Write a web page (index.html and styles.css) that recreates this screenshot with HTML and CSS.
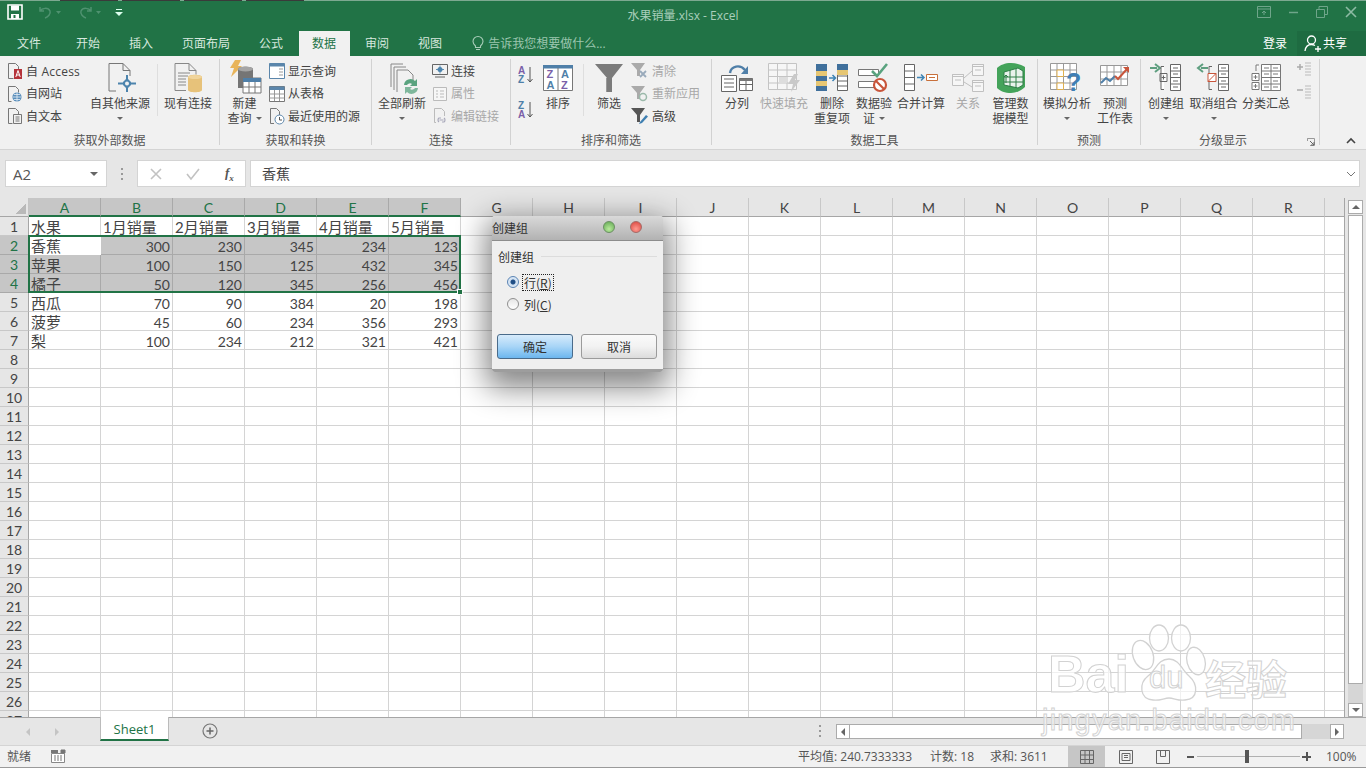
FILE: index.html
```html
<!DOCTYPE html>
<html lang="zh-CN">
<head>
<meta charset="utf-8">
<title>水果销量.xlsx - Excel</title>
<link rel="stylesheet" href="styles.css">
</head>
<body>
<div class="app">
  <header class="titlebar">
    <div class="qat">
      <svg class="qat-save" width="16" height="16" viewBox="0 0 16 16"><path d="M1 1h14v14H1z" fill="none" stroke="#fff" stroke-width="1.6"/><path d="M4 1.500h8v5H4z" fill="#fff"/><path d="M4 10h8v5H4z" fill="#fff"/><path d="M6.500 11h2v3h-2z" fill="#217346"/></svg>
      <svg class="qat-undo" width="26" height="14" viewBox="0 0 26 14"><path d="M3 2v4h4M3 6c2-3 8-4 10 0 1 3-2 6-5 7" fill="none" stroke="#4f9270" stroke-width="1.500"/><path d="M19 6l5 0-2.500 3z" fill="#4f9270"/></svg>
      <svg class="qat-redo" width="26" height="14" viewBox="0 0 26 14"><path d="M14 2v4h-4M14 6c-2-3-8-4-10 0-1 3 2 6 5 7" fill="none" stroke="#4f9270" stroke-width="1.500"/><path d="M19 6l5 0-2.500 3z" fill="#4f9270"/></svg>
      <svg class="qat-more" width="8" height="9" viewBox="0 0 8 9"><path d="M1 1h6v1H1zM0 4h8L4 8z" fill="#dfe"/></svg>
    </div>
    <div class="doc-title">水果销量.xlsx - Excel</div>
    <div class="winctl">
      <svg width="14" height="12" viewBox="0 0 14 12"><path d="M.5.500h13v11H.500zM.5 3h13M7 9V5M5 7l2-2 2 2" fill="none" stroke="#6fa58a"/></svg>
      <svg width="11" height="12" viewBox="0 0 11 12"><path d="M1 6.500h9" stroke="#6fa58a" stroke-width="1.500"/></svg>
      <svg width="12" height="12" viewBox="0 0 12 12"><path d="M.5 3.500h8v8H.500zM3 3.500V.500h8.500v8H8.500" fill="none" stroke="#6fa58a"/></svg>
      <svg width="12" height="12" viewBox="0 0 12 12"><path d="M1 1l10 10M11 1L1 11" stroke="#8dbba4" stroke-width="1.600"/></svg>
    </div>
  </header>

  <nav class="tabs">
    <span class="tab tab-file">文件</span>
    <span class="tab">开始</span>
    <span class="tab">插入</span>
    <span class="tab">页面布局</span>
    <span class="tab">公式</span>
    <span class="tab tab-active">数据</span>
    <span class="tab">审阅</span>
    <span class="tab">视图</span>
    <span class="tell">
      <svg width="12" height="15" viewBox="0 0 12 15"><path d="M3.500 10C2 8.500 1 7.500 1 5.500a5 5 0 0 1 10 0c0 2-1 3-2.500 4.500v1.500h-5zM4 13.500h4" fill="none" stroke="#a9cdb9" stroke-width="1.100"/></svg>
      告诉我您想要做什么...
    </span>
    <span class="login">登录</span>
    <span class="share">
      <svg width="18" height="17" viewBox="0 0 18 17"><circle cx="7.500" cy="5" r="4" fill="none" stroke="#fff" stroke-width="1.300"/><path d="M1 16c.5-4 3-6.500 6.500-6.500 1.500 0 2.500.5 3.500 1M11 14h6M14 11v6" fill="none" stroke="#fff" stroke-width="1.300"/></svg>
      共享
    </span>
  </nav>

  <section class="ribbon">
    <!-- 获取外部数据 -->
    <div class="group g-ext">
      <div class="items">
        <div class="col col-ext">
          <div class="small"><svg width="16" height="18" viewBox="0 0 16 18"><path d="M1.500 1.500h7l3 3v3M1.500 1.500v15h5" fill="none" stroke="#777"/><path d="M7 7h8v10H7z" fill="#b5333a"/><path d="M8.800 15l2.200-6.500 2.200 6.500M9.500 13h3" fill="none" stroke="#fff"/></svg><span class="sm-latin">自 Access</span></div>
          <div class="small"><svg width="16" height="18" viewBox="0 0 16 18"><path d="M4.500 16.500h-3v-15h7l3 3v3" fill="none" stroke="#777"/><circle cx="10" cy="12" r="4.600" fill="#5b8fbc"/><path d="M5.800 12h8.400M10 7.500v9M7 9.500h6M7 14.500h6" stroke="#e8f0f6" stroke-width=".8"/></svg><span>自网站</span></div>
          <div class="small"><svg width="16" height="18" viewBox="0 0 16 18"><path d="M5.500 16.500h-4v-15h7l3 3v3" fill="none" stroke="#777"/><path d="M6.500 7.500h8v9h-8zM8.500 10h4M8.500 12h4M8.500 14h4" fill="none" stroke="#777"/></svg><span>自文本</span></div>
        </div>
        <div class="big w60">
          <div class="ico"><svg width="34" height="34" viewBox="0 0 34 34"><path d="M13 30H6V2.500h14l7 7V15M20 2.500v7h7" fill="none" stroke="#777"/><path d="M24 14v4M24 27v4M15 22.500h4M29 22.500h4" stroke="#4d84ad" stroke-width="2"/><path d="M24 17l5.500 5.500L24 28l-5.500-5.500z" fill="#4d84ad"/><circle cx="24" cy="22.500" r="2" fill="#f1f1f1"/></svg></div>
          <span>自其他来源</span><i class="caret"></i>
        </div>
        <div class="vsep sep-ext"></div>
        <div class="big w56">
          <div class="ico"><svg width="34" height="34" viewBox="0 0 34 34"><path d="M15 29.500H4V2.500h14l7 7v4M18 2.500v7h7M7 12h12M7 15h10M7 18h8M7 21h8M7 24h8" fill="none" stroke="#888"/><path d="M17 16c0-3 14-3 14 0v13c0 3-14 3-14 0z" fill="#e7c27a"/><ellipse cx="24" cy="16" rx="7" ry="2" fill="#f1d59c"/></svg></div>
          <span>现有连接</span>
        </div>
      </div>
      <div class="glabel">获取外部数据</div>
    </div>

    <!-- 获取和转换 -->
    <div class="group g-get">
      <div class="items">
        <div class="big w49">
          <div class="ico"><svg width="36" height="36" viewBox="0 0 36 36"><path d="M8 0h6l-3 6h4L4 17l3-9H3z" fill="#e8b45a"/><path d="M11 9c0-3 15-3 15 0v19H11z" fill="#757575"/><ellipse cx="18.500" cy="9" rx="7.500" ry="2.500" fill="#a5a5a5"/><path d="M16 18h18v15H16z" fill="#fff" stroke="#777"/><path d="M16 18h18v4H16z" fill="#4f7fa8"/><path d="M16 27h18M22 22v11M28 22v11" stroke="#777"/></svg></div>
          <span>新建</span><span>查询<i class="caret inline"></i></span>
        </div>
        <div class="col">
          <div class="small sm-w"><svg width="16" height="16" viewBox="0 0 16 16"><path d="M.5.500h15v15H.500z" fill="#fff" stroke="#5b86ab"/><path d="M.5.500h15v3H.500z" fill="#5b86ab"/><path d="M10 6h4M10 9h4M10 12h4" stroke="#999"/></svg><span>显示查询</span></div>
          <div class="small sm-w"><svg width="16" height="16" viewBox="0 0 16 16"><path d="M.5.500h15v15H.500z" fill="#fff" stroke="#777"/><path d="M.5.500h15v3.500H.500z" fill="#5b86ab"/><path d="M.5 8h15M.5 12h15M5.500 4v11M10.500 4v11" stroke="#999"/></svg><span>从表格</span></div>
          <div class="small sm-w"><svg width="16" height="18" viewBox="0 0 16 18"><path d="M5 16.500H1.500v-15h6l3 3V8" fill="none" stroke="#777"/><circle cx="10.500" cy="12.500" r="4.500" fill="#fff" stroke="#5b86ab"/><path d="M10.500 10v3h2.500" fill="none" stroke="#555"/></svg><span>最近使用的源</span></div>
        </div>
      </div>
      <div class="glabel">获取和转换</div>
    </div>

    <!-- 连接 -->
    <div class="group g-conn">
      <div class="items">
        <div class="big w60">
          <div class="ico"><svg width="34" height="34" viewBox="0 0 34 34"><path d="M6 26V3h12M9 29V6h12M12 31V9h11l5 5v5" fill="none" stroke="#888"/><path d="M19 24a6.500 6.500 0 0 1 11-4l2-2v7h-7l2-2a3.500 3.500 0 0 0-5 1z" fill="#5aa37f"/><path d="M33 27a6.500 6.500 0 0 1-11 4l-2 2v-7h7l-2 2a3.500 3.500 0 0 0 5-1z" fill="#7fb79c"/></svg></div>
          <span>全部刷新</span><i class="caret"></i>
        </div>
        <div class="col">
          <div class="small sm-w"><svg width="16" height="16" viewBox="0 0 16 16"><path d="M.5 1.500h15v10H.500zM3 14h10" fill="none" stroke="#666"/><circle cx="8" cy="6.500" r="2.500" fill="#4d84ad"/><path d="M8 2.500v8M4 6.500h8" stroke="#4d84ad" stroke-width=".9"/></svg><span>连接</span></div>
          <div class="small sm-w off"><svg width="16" height="16" viewBox="0 0 16 16"><path d="M1.500 1.500h13v13h-13z" fill="#f6f6f6" stroke="#bbb"/><path d="M4 5h2M8 5h4M4 8h2M8 8h4M4 11h2M8 11h4" stroke="#bbb"/></svg><span>属性</span></div>
          <div class="small sm-w off"><svg width="16" height="18" viewBox="0 0 16 18"><path d="M4 15.500H2.500v-14h7l3 3V9" fill="none" stroke="#bbb"/><path d="M7 15a2.500 2.500 0 0 1 0-4h2M12 11a2.500 2.500 0 0 1 0 4h-2M7.500 13h4" fill="none" stroke="#aab" stroke-width="1.200"/></svg><span>编辑链接</span></div>
        </div>
      </div>
      <div class="glabel">连接</div>
    </div>

    <!-- 排序和筛选 -->
    <div class="group g-sort">
      <div class="items">
        <div class="col col-az">
          <svg class="az" width="16" height="20" viewBox="0 0 16 20"><text x="0" y="9" class="az-top">A</text><text x="0" y="18" class="az-bot">Z</text><path d="M12 2v15M9.500 14l2.500 3 2.500-3" fill="none" stroke="#555"/></svg>
          <svg class="az" width="16" height="20" viewBox="0 0 16 20"><text x="0" y="9" class="az-bot">Z</text><text x="0" y="18" class="az-top">A</text><path d="M12 2v15M9.500 14l2.500 3 2.500-3" fill="none" stroke="#555"/></svg>
        </div>
        <div class="big w34">
          <div class="ico"><svg width="30" height="26" viewBox="0 0 30 26"><path d="M.5.500h29v25H.500z" fill="#fff" stroke="#777"/><path d="M0 0h30v3.500H0z" fill="#4f7fa8"/><path d="M15 3v23" stroke="#777"/><text x="3.500" y="13" class="az-a">Z</text><text x="3.500" y="23.500" class="az-b">A</text><text x="18" y="13" class="az-b">A</text><text x="18" y="23.500" class="az-a">Z</text></svg></div>
          <span>排序</span>
        </div>
        <div class="vsep sep-sort"></div>
        <div class="big w36">
          <div class="ico"><svg width="28" height="28" viewBox="0 0 28 28"><path d="M0 0h28L17 14v14h-5V14z" fill="#7b7b7b"/><path d="M11.500 14v14" stroke="#999"/></svg></div>
          <span>筛选</span>
        </div>
        <div class="col col-filter">
          <div class="small off"><svg width="18" height="16" viewBox="0 0 18 16"><path d="M0 0h14L9 7v6H6V7z" fill="#aaa"/><path d="M9 8l6 6M15 8l-6 6" stroke="#9ab" stroke-width="1.800"/></svg><span>清除</span></div>
          <div class="small off"><svg width="18" height="16" viewBox="0 0 18 16"><path d="M0 0h14L9 7v6H6V7z" fill="#aaa"/><circle cx="12" cy="11" r="3.500" fill="none" stroke="#9bb9aa" stroke-width="1.500"/></svg><span>重新应用</span></div>
          <div class="small"><svg width="18" height="16" viewBox="0 0 18 16"><path d="M0 0h14L9 7v7H6V7z" fill="#555"/><path d="M9 14l6-7 2 1.500-6 6.500-3 1z" fill="#3e7fb1"/></svg><span>高级</span></div>
        </div>
      </div>
      <div class="glabel">排序和筛选</div>
    </div>

    <!-- 数据工具 -->
    <div class="group g-tools">
      <div class="items">
        <div class="big w50">
          <div class="ico"><svg width="32" height="30" viewBox="0 0 32 30"><path d="M.5 12.500h15v16H.500zM3 16h10M3 20h10M3 24h10" fill="#fff" stroke="#666"/><path d="M18.500 15.500h13v12h-13zM18.500 21.500h13M25 15.500v12" fill="#fff" stroke="#666"/><path d="M18.500 15.500h13v2.500h-13z" fill="#777"/><path d="M9 10c1-7 10-9 15-3" fill="none" stroke="#4f7fa8" stroke-width="2.400"/><path d="M27 3v8h-7z" fill="#4f7fa8"/></svg></div>
          <span>分列</span>
        </div>
        <div class="big w44 off">
          <div class="ico"><svg width="32" height="30" viewBox="0 0 32 30"><path d="M.5.500h28v26H.500zM.5 7h28M.5 13.500h28M.5 20h28M9.500.500v26M19 .500v26" fill="#f6f6f6" stroke="#c4c4c4"/><path d="M11 14h8v6h-8z" fill="#ddd"/><path d="M26 11l-6 10h5l-2 8 9-12h-5l3-6z" fill="#c9c9c9"/></svg></div>
          <span>快速填充</span>
        </div>
        <div class="big w52">
          <div class="ico"><svg width="32" height="28" viewBox="0 0 32 28"><path d="M0 0h11v27H0z" fill="#40709c"/><path d="M0 7h11v5H0zM0 17h11v5H0z" fill="#e6c673"/><path d="M21.500.500h10v26h-10zM21.500 12h10M21.500 17h10M21.500 22h10" fill="#fff" stroke="#666"/><path d="M21 0h11v6H21z" fill="#40709c"/><path d="M21 6h11v5H21z" fill="#e6c673"/><path d="M13 14h6M16.500 11l3 3-3 3" fill="none" stroke="#3f84b5" stroke-width="1.500"/></svg></div>
          <span>删除</span><span>重复项</span>
        </div>
        <div class="big w32">
          <div class="ico"><svg width="32" height="30" viewBox="0 0 32 30"><path d="M.5 6.500h20v6H.500zM.5 18.500h16v6H.500z" fill="#fff" stroke="#777"/><path d="M14 8l5 5 10-12" fill="none" stroke="#5aa37f" stroke-width="2.600"/><circle cx="22" cy="22" r="6" fill="#fff" stroke="#c8553b" stroke-width="2.200"/><path d="M18 18l8 8" stroke="#c8553b" stroke-width="2.200"/></svg></div>
          <span>数据验</span><span>证<i class="caret inline"></i></span>
        </div>
        <div class="big w62">
          <div class="ico"><svg width="34" height="28" viewBox="0 0 34 28"><path d="M.5.500h10v26H.500zM.5 7h10M.5 13.500h10M.5 20h10" fill="#fff" stroke="#666"/><path d="M13 13.500h7M17 10.500l3 3-3 3" fill="none" stroke="#3f84b5" stroke-width="1.500"/><path d="M22.500 10.500h11v6h-11z" fill="#fff" stroke="#c8703b"/><path d="M25 13.500h6" stroke="#c8703b"/></svg></div>
          <span>合并计算</span>
        </div>
        <div class="big w32 off">
          <div class="ico"><svg width="32" height="28" viewBox="0 0 32 28"><path d="M.5 10.500h11v11H.500zM20.500.500h11v11h-11zM20.500 16.500h11v11h-11z" fill="#f6f6f6" stroke="#c0c0c0"/><path d="M.5 10.500h11v2H.500zM20.500.500h11v2h-11zM20.500 16.500h11v2h-11zM3 16h6M23 6h6M23 22h6M12 14l8-7M12 18l8 5" fill="none" stroke="#c0c0c0"/></svg></div>
          <span>关系</span>
        </div>
        <div class="big w53">
          <div class="ico"><svg width="30" height="30" viewBox="0 0 30 30"><path d="M15 0c6 0 11 2 14 4v20c-3 3-8 6-14 6S4 28 1 25V5c3-3 8-5 14-5z" fill="#44a35a"/><path d="M8 9l14-4 5 3v14l-5 3-14-3z" fill="#e9f3ec" stroke="#2f7f47"/><path d="M14 7v17M20 6v19M8 14h19M8 19h19" stroke="#2f7f47"/><path d="M10 20v-8M10 12l-2 2M10 12l2 2" fill="none" stroke="#2f7f47"/></svg></div>
          <span>管理数</span><span>据模型</span>
        </div>
      </div>
      <div class="glabel">数据工具</div>
    </div>

    <!-- 预测 -->
    <div class="group g-fore">
      <div class="items">
        <div class="big w58">
          <div class="ico"><svg width="34" height="30" viewBox="0 0 34 30"><path d="M.5.500h26v26H.500zM.5 7h26M.5 13.500h26M.5 20h26M7 .500v26M13.500.500v26M20 .500v26" fill="#fff" stroke="#999"/><path d="M7 7h6.500v6.500H7zM7 20h6.500v6.500H7z" fill="#fff" stroke="#e0b050"/><text x="16" y="28" class="qm">?</text></svg></div>
          <span>模拟分析</span><i class="caret"></i>
        </div>
        <div class="big w38">
          <div class="ico"><svg width="30" height="26" viewBox="0 0 30 26"><path d="M.5.500h27v20H.500zM.5 7h27M.5 14h27M7 .500v20M14 .500v20M21 .500v20" fill="#fff" stroke="#999"/><path d="M1 18l5-5 4 3 5-5" fill="none" stroke="#4f7fa8" stroke-width="2"/><path d="M15 11l3 3 9-10" fill="none" stroke="#c8553b" stroke-width="2"/><path d="M23 2h6v6z" fill="#c8553b"/></svg></div>
          <span>预测</span><span>工作表</span>
        </div>
      </div>
      <div class="glabel">预测</div>
    </div>

    <!-- 分级显示 -->
    <div class="group g-outline">
      <div class="items">
        <div class="big w50">
          <div class="ico"><svg width="32" height="28" viewBox="0 0 32 28"><path d="M0 4h7M5 0l5 4-5 4" fill="none" stroke="#5f9f80" stroke-width="2"/><path d="M14 2.500h-3v23h3M10 9.500h7v8h-7zM13.500 11.500v4M11.500 13.500h4" fill="#fff" stroke="#666"/><path d="M20.500.500h10v26h-10zM20.500 7h10M20.500 13.500h10M20.500 20h10M23 4h5M23 10h5M23 17h5M23 23h5" fill="#fff" stroke="#666"/></svg></div>
          <span>创建组</span><i class="caret"></i>
        </div>
        <div class="big w45">
          <div class="ico"><svg width="32" height="28" viewBox="0 0 32 28"><path d="M10 4H3M5 0L0 4l5 4" fill="none" stroke="#5f9f80" stroke-width="2"/><path d="M14 2.500h-3v23h3" fill="none" stroke="#666"/><path d="M10 9.500h8v8h-8z" fill="#fff" stroke="#c8553b"/><path d="M10 17.500l8-8" stroke="#c8553b"/><path d="M20.500.500h10v26h-10zM20.500 7h10M20.500 13.500h10M20.500 20h10M23 4h5M23 10h5M23 17h5M23 23h5" fill="#fff" stroke="#666"/></svg></div>
          <span>取消组合</span><i class="caret"></i>
        </div>
        <div class="big w60">
          <div class="ico"><svg width="30" height="28" viewBox="0 0 30 28"><path d="M5 7V1h3M1 9.500h7v7H1zM1 18.500h7v7H1zM4.500 11v4M2.500 13h4M4.500 20v4M2.500 22h4" fill="#fff" stroke="#777"/><path d="M10.500.500h19v26h-19zM10.500 7h19M10.500 13.500h19M10.500 20h19M20 .500v26M13 4h5M13 10h5M13 17h5M13 23h5M22 4h5M22 10h5M22 17h5M22 23h5" fill="#fff" stroke="#777"/></svg></div>
          <span>分类汇总</span>
        </div>
        <div class="col col-outl">
          <svg width="16" height="16" viewBox="0 0 16 16"><path d="M1 5h6M4 2v6" stroke="#aaa" stroke-width="1.500"/><path d="M9 1h6M9 4h6M9 7h6M9 10h6M9 13h6" stroke="#bbb"/></svg>
          <svg width="16" height="16" viewBox="0 0 16 16"><path d="M1 5h6" stroke="#aaa" stroke-width="1.500"/><path d="M9 1h6M9 4h6M9 7h6M9 10h6M9 13h6" stroke="#bbb"/></svg>
        </div>
      </div>
      <div class="glabel">分级显示</div>
      <svg class="launcher" width="8" height="8" viewBox="0 0 8 8"><path d="M.5 3V.500H5M.5.500h7v7H3" fill="none" stroke="#999"/><path d="M3 3l4 4M4 7h3V4" fill="none" stroke="#666"/></svg>
    </div>
    <svg class="fold" width="10" height="6" viewBox="0 0 10 6"><path d="M1 5l4-4 4 4" fill="none" stroke="#444" stroke-width="1.600"/></svg>
  </section>

  <section class="fbar">
    <div class="namebox"><span>A2</span><i class="caret"></i></div>
    <div class="fdots"></div>
    <div class="fbtns">
      <svg width="12" height="12" viewBox="0 0 12 12"><path d="M1 1l10 10M11 1L1 11" stroke="#c2c2c2" stroke-width="1.600"/></svg>
      <svg width="14" height="12" viewBox="0 0 14 12"><path d="M1 6l4 5 8-10" fill="none" stroke="#c2c2c2" stroke-width="1.600"/></svg>
      <span class="fx">f<sub>x</sub></span>
    </div>
    <div class="finput"><span>香蕉</span><svg width="10" height="6" viewBox="0 0 10 6"><path d="M1 1l4 4 4-4" fill="none" stroke="#777"/></svg></div>
  </section>

  <main class="sheet">
    <div class="grid">
      <div class="colhead">
        <div class="corner"></div>
        <span class="ch sel">A</span><span class="ch sel">B</span><span class="ch sel">C</span><span class="ch sel">D</span><span class="ch sel">E</span><span class="ch sel">F</span>
        <span class="ch">G</span><span class="ch">H</span><span class="ch">I</span><span class="ch">J</span><span class="ch">K</span><span class="ch">L</span><span class="ch">M</span><span class="ch">N</span><span class="ch">O</span><span class="ch">P</span><span class="ch">Q</span><span class="ch">R</span>
        <span class="ch-fill"></span>
      </div>
      <div class="row"><span class="rh">1</span><div class="cells"><span class="c">水果</span><span class="c">1月销量</span><span class="c">2月销量</span><span class="c">3月销量</span><span class="c">4月销量</span><span class="c">5月销量</span></div></div>
      <div class="row"><span class="rh sel">2</span><div class="cells"><span class="c active">香蕉</span><span class="c n s">300</span><span class="c n s">230</span><span class="c n s">345</span><span class="c n s">234</span><span class="c n s">123</span></div></div>
      <div class="row"><span class="rh sel">3</span><div class="cells"><span class="c s">苹果</span><span class="c n s">100</span><span class="c n s">150</span><span class="c n s">125</span><span class="c n s">432</span><span class="c n s">345</span></div></div>
      <div class="row"><span class="rh sel">4</span><div class="cells"><span class="c s">橘子</span><span class="c n s">50</span><span class="c n s">120</span><span class="c n s">345</span><span class="c n s">256</span><span class="c n s">456</span></div></div>
      <div class="row"><span class="rh">5</span><div class="cells"><span class="c">西瓜</span><span class="c n">70</span><span class="c n">90</span><span class="c n">384</span><span class="c n">20</span><span class="c n">198</span></div></div>
      <div class="row"><span class="rh">6</span><div class="cells"><span class="c">菠萝</span><span class="c n">45</span><span class="c n">60</span><span class="c n">234</span><span class="c n">356</span><span class="c n">293</span></div></div>
      <div class="row"><span class="rh">7</span><div class="cells"><span class="c">梨</span><span class="c n">100</span><span class="c n">234</span><span class="c n">212</span><span class="c n">321</span><span class="c n">421</span></div></div>
      <div class="row"><span class="rh">8</span><div class="cells"></div></div>
      <div class="row"><span class="rh">9</span><div class="cells"></div></div>
      <div class="row"><span class="rh">10</span><div class="cells"></div></div>
      <div class="row"><span class="rh">11</span><div class="cells"></div></div>
      <div class="row"><span class="rh">12</span><div class="cells"></div></div>
      <div class="row"><span class="rh">13</span><div class="cells"></div></div>
      <div class="row"><span class="rh">14</span><div class="cells"></div></div>
      <div class="row"><span class="rh">15</span><div class="cells"></div></div>
      <div class="row"><span class="rh">16</span><div class="cells"></div></div>
      <div class="row"><span class="rh">17</span><div class="cells"></div></div>
      <div class="row"><span class="rh">18</span><div class="cells"></div></div>
      <div class="row"><span class="rh">19</span><div class="cells"></div></div>
      <div class="row"><span class="rh">20</span><div class="cells"></div></div>
      <div class="row"><span class="rh">21</span><div class="cells"></div></div>
      <div class="row"><span class="rh">22</span><div class="cells"></div></div>
      <div class="row"><span class="rh">23</span><div class="cells"></div></div>
      <div class="row"><span class="rh">24</span><div class="cells"></div></div>
      <div class="row"><span class="rh">25</span><div class="cells"></div></div>
      <div class="row"><span class="rh">26</span><div class="cells"></div></div>
      <div class="row"><span class="rh">27</span><div class="cells"></div></div>
      <div class="selection"><i class="handle"></i></div>
    </div>
    <div class="vscroll">
      <button class="sbtn"><i class="tri up"></i></button>
      <div class="vthumb"></div>
      <div class="vtrack"></div>
      <button class="sbtn"><i class="tri down"></i></button>
    </div>
  </main>

  <section class="sheetbar">
    <div class="navs"><i class="tri left dim"></i><i class="tri right dim"></i></div>
    <div class="sheet-tab">Sheet1</div>
    <svg class="addsheet" width="16" height="16" viewBox="0 0 16 16"><circle cx="8" cy="8" r="7" fill="none" stroke="#777" stroke-width="1.200"/><path d="M4.500 8h7M8 4.500v7" stroke="#666" stroke-width="1.500"/></svg>
    <div class="sdots"></div>
    <div class="hscroll">
      <button class="sbtn"><i class="tri left"></i></button>
      <div class="hthumb"></div>
      <div class="htrack"></div>
      <button class="sbtn"><i class="tri right"></i></button>
    </div>
  </section>

  <footer class="status">
    <span class="ready">就绪</span>
    <svg class="macro" width="14" height="13" viewBox="0 0 14 13"><path d="M.5 3.500h13v9H.500z" fill="#fff" stroke="#888"/><path d="M0 0h7v3H0z" fill="#777"/><path d="M10 0h4v3h-4zM3 6h2M6 6h2M9 6h2M3 8h2M6 8h2M9 8h2M3 10h2M6 10h2M9 10h2" fill="#777" stroke="#777"/></svg>
    <span class="stat st-avg">平均值: 240.7333333</span>
    <span class="stat st-cnt">计数: 18</span>
    <span class="stat st-sum">求和: 3611</span>
    <span class="view view-on"><svg width="14" height="14" viewBox="0 0 14 14"><path d="M.5.500h13v13H.500zM.5 5h13M.5 9.500h13M5 .500v13M9.500.500v13" fill="none" stroke="#666"/></svg></span>
    <span class="view"><svg width="14" height="14" viewBox="0 0 14 14"><path d="M.5.500h13v13H.500zM3 3.500h8v7H3zM5 5.500h4M5 7.500h4" fill="none" stroke="#666"/></svg></span>
    <span class="view"><svg width="14" height="14" viewBox="0 0 14 14"><path d="M.5.500h13v13H.500zM4.500.500v6h5v-6" fill="none" stroke="#666"/></svg></span>
    <span class="zoom-minus"></span>
    <span class="slider"><i class="knob"></i></span>
    <span class="zoom-plus"></span>
    <span class="pct">100%</span>
  </footer>

  <div class="shade-dialog">
    <div class="dlg-title"><span>创建组</span><i class="orb green"></i><i class="orb red"></i></div>
    <div class="dlg-body">
      <div class="legend"><span>创建组</span><i></i></div>
      <div class="radio-row"><i class="radio on"></i><span class="focus">行(<u>R</u>)</span></div>
      <div class="radio-row"><i class="radio"></i><span class="plain">列(<u>C</u>)</span></div>
      <div class="dlg-btns"><button class="btn primary">确定</button><button class="btn">取消</button></div>
    </div>
  </div>

  <div class="watermark">
    <svg class="paw" width="70" height="90" viewBox="0 0 70 90"><g fill="rgba(255,255,255,.65)" stroke="#d2d2d2" stroke-width="1.300"><ellipse cx="26" cy="17" rx="9.500" ry="13"/><ellipse cx="48" cy="17" rx="9.500" ry="13"/><ellipse cx="10" cy="34" rx="10" ry="15" transform="rotate(-20 10 34)"/><ellipse cx="63" cy="40" rx="9" ry="14" transform="rotate(-15 63 40)"/><path d="M36 38c10 0 13 11 20 17 9 8 10 23-4 24-7 1-11-2-16-2s-9 3-16 2C6 78 6 62 15 55c8-6 10-17 21-17z"/></g></svg>
    <span class="wm wm-bai">Bai</span>
    <span class="wm wm-du">du</span>
    <span class="wm wm-jy">经验</span>
    <span class="wm wm-url">jingyan.baidu.com</span>
  </div>
</div>
</body>
</html>
```

FILE: styles.css
```css
* { box-sizing: border-box; }
html, body { margin: 0; height: 100%; }
body {
  overflow: hidden;
  font: 12px/15px "Open Sans", "Noto Sans CJK SC", sans-serif;
  color: #444;
  background: #e6e6e6;
}
.app { position: relative; width: 1366px; height: 768px; display: flex; flex-direction: column; overflow: hidden; }
svg { display: block; flex: none; overflow: visible; }
button { font: inherit; padding: 0; }

/* title bar */
.titlebar {
  height: 31px; flex: none; background: #217346; border-top: 1px solid #7da991;
  display: flex; align-items: flex-start; position: relative;
}
.titlebar::before {
  content: ""; position: absolute; left: 60px; top: -1px; width: 245px; height: 1px;
  background: repeating-linear-gradient(90deg, #3a3a3a 0 58px, #7da991 58px 62px);
}
.qat { display: flex; align-items: center; padding: 3px 0 0 7px; }
.qat-undo { margin-left: 14px; }
.qat-redo { margin-left: 14px; }
.qat-more { margin-left: 12px; }
.doc-title { position: absolute; left: 0; right: 0; top: 7px; text-align: center; color: #a9cfbb; font-size: 12px; line-height: 16px; }
.winctl { margin-left: auto; display: flex; align-items: center; gap: 17px; padding: 5px 9px 0 0; position: relative; }

/* tabs */
.tabs { height: 25px; flex: none; background: #217346; display: flex; align-items: stretch; color: #d7e8de; line-height: 25px; padding-left: 3px; }
.tab { padding: 0 14px; margin-right: 1px; }
.tab-file { margin-right: 7px; }
.tab-active { background: #f1f1f1; color: #217346; padding: 0 14px 0 13px; margin-left: 1px; }
.tell { display: flex; align-items: center; gap: 4px; margin-left: 15px; color: #9cc6af; }
.login { margin-left: auto; color: #fff; padding-right: 10px; }
.share { width: 69px; background: #1e6b41; color: #fff; display: flex; align-items: center; gap: 1px; padding-left: 7px; }

/* ribbon */
.ribbon { height: 94px; flex: none; background: #f1f1f1; border-bottom: 1px solid #d4d4d4; display: flex; }
.group { display: flex; flex-direction: column; border-right: 1px solid #d2d2d2; margin: 3px 0 4px; position: relative; }
.g-ext { width: 220px; }
.g-get { width: 152px; }
.g-conn { width: 139px; }
.g-sort { width: 201px; }
.g-tools { width: 326px; }
.g-fore { width: 103px; }
.g-outline { width: 179px; }
.items { flex: 1; display: flex; align-items: flex-start; padding-top: 1px; }
.g-ext .items { padding-left: 7px; }
.glabel { height: 15px; text-align: center; line-height: 15px; color: #555; margin-bottom: -3px; }
.g-outline .glabel { padding-right: 14px; }
.launcher { position: absolute; right: 4px; bottom: -1px; }
.fold { align-self: flex-end; margin: 0 0 5px 26px; }
.big { display: flex; flex-direction: column; align-items: center; white-space: nowrap; flex: none; }
.ico { height: 36px; display: flex; align-items: center; justify-content: center; }
.w32 { width: 32px; } .w34 { width: 34px; } .w36 { width: 36px; } .w38 { width: 38px; }
.w44 { width: 44px; } .w45 { width: 45px; } .w49 { width: 49px; } .w50 { width: 50px; }
.w52 { width: 52px; } .w53 { width: 53px; } .w56 { width: 56px; } .w58 { width: 58px; }
.w60 { width: 60px; } .w62 { width: 62px; }
.off, .off span { color: #a8a8a8; }
.col { display: flex; flex-direction: column; flex: none; }
.col-ext { width: 83px; }
.col-az { width: 30px; align-items: center; gap: 15px; padding-top: 5px; }
.col-filter { margin-left: 4px; }
.col-outl { width: 20px; gap: 7px; padding-top: 2px; }
.small { display: flex; align-items: center; gap: 3px; height: 22.5px; white-space: nowrap; }
.sm-w svg { width: 16px; }
.sm-latin { letter-spacing: .2px; }
.vsep { width: 1px; height: 52px; background: #dedede; margin-top: 4px; flex: none; }
.sep-ext { margin-left: 7px; margin-right: 2px; }
.sep-sort { margin-left: 8px; margin-right: 7px; }
.caret { display: block; width: 0; height: 0; border: 3px solid transparent; border-top-color: #666; border-bottom: 0; margin-top: 6px; }
.caret.inline { display: inline-block; margin: 0 0 2px 4px; vertical-align: middle; }
.az-top, .az-a { font: 700 10px "Liberation Sans", sans-serif; fill: #7a5fa8; }
.az-bot, .az-b { font: 700 10px "Liberation Sans", sans-serif; fill: #4f7fa8; }
.az-a, .az-b { font-size: 11px; }
.qm { font: 700 25px "Liberation Sans", sans-serif; fill: #3f7fb5; }

/* formula bar */
.fbar { height: 48px; flex: none; background: #e6e6e6; display: flex; align-items: flex-start; padding: 10px 6px 0 5px; }
.namebox, .fbtns, .finput { height: 27px; background: #fff; border: 1px solid #d4d4d4; display: flex; align-items: center; }
.namebox { width: 102px; padding: 0 8px 0 7px; justify-content: space-between; font: 15px "Open Sans", sans-serif; color: #555; }
.namebox .caret { margin: 0; border-width: 4px; border-bottom: 0; }
.fdots { width: 2px; height: 12px; margin: 8px 14px 0 14px; background: repeating-linear-gradient(#999 0 2px, transparent 2px 5px); }
.fbtns { width: 109px; padding-left: 12px; gap: 24px; margin-right: 4px; }
.fx { font: italic 700 13px "Liberation Serif", serif; color: #555; margin-left: 1px; }
.fx sub { font-size: 9px; }
.finput { flex: 1; padding: 0 3px 0 11px; justify-content: space-between; font-size: 14px; color: #444; }

/* grid */
.sheet { height: 519px; flex: none; display: flex; background: #e6e6e6; }
.grid { width: 1345px; position: relative; overflow: hidden; background: #fff; border-right: 1px solid #a6a6a6; font-family: Lato, "Noto Sans CJK SC", sans-serif; }
.colhead { height: 19px; display: flex; background: #e6e6e6; }
.corner { width: 29px; position: relative; border-right: 1px solid #c4c4c4; border-bottom: 1px solid #a6a6a6; background: linear-gradient(135deg, transparent 62%, #b9b9b9 62%) no-repeat 12px 3px / 14px 13px; }
.ch { width: 72px; text-align: center; font-size: 14px; line-height: 19px; color: #444; border-right: 1px solid #c8c8c8; border-bottom: 1px solid #a6a6a6; }
.ch.sel { background: #c6c6c6; color: #217346; border-right-color: #a9a9a9; border-bottom: 2px solid #217346; }
.ch-fill { flex: 1; border-bottom: 1px solid #a6a6a6; }
.row { height: 19px; display: flex; }
.rh { width: 29px; flex: none; text-align: center; font-size: 14px; line-height: 20px; color: #444; background: #e6e6e6; border-right: 1px solid #a6a6a6; border-bottom: 1px solid #c8c8c8; overflow: hidden; }
.rh.sel { background: #c6c6c6; color: #217346; border-bottom-color: #a9a9a9; }
.cells {
  flex: 1; display: flex; border-bottom: 1px solid #d4d4d4;
  background: linear-gradient(90deg, transparent 71px, #d4d4d4 71px) 0 0 / 72px 100%;
}
.c { width: 72px; height: 19px; padding: 0 3px 0 2px; font-size: 15px; line-height: 21px; color: #444; white-space: nowrap; flex: none; overflow: visible; }
.c.n { text-align: right; font-size: 14px; }
.c.n.s { padding-right: 2px; }
.c.s { background: #c6c6c6; border-right: 1px solid #a9a9a9; border-bottom: 1px solid #a9a9a9; }
.c.active { background: #fff; }
.selection { position: absolute; left: 28px; top: 37px; width: 433px; height: 58px; border: 2px solid #217346; pointer-events: none; }
.handle { position: absolute; right: -4px; bottom: -4px; background: #217346; border: 1px solid #fff; box-sizing: content-box; width: 4px; height: 4px; }

/* scrollbars */
.vscroll { flex: 1; display: flex; flex-direction: column; padding: 2px 3px 0 3px; }
.sbtn { background: #fff; border: 1px solid #ababab; width: 15px; height: 14px; display: flex; align-items: center; justify-content: center; flex: none; }
.vthumb { height: 469px; background: #fff; border: 1px solid #ababab; margin-top: 1px; }
.vtrack { flex: 1; background: #d6d6d6; }
.tri { display: block; width: 0; height: 0; border: 4px solid transparent; }
.tri.up { border-bottom-color: #666; border-top: 0; }
.tri.down { border-top-color: #666; border-bottom: 0; }
.tri.left { border-right-color: #666; border-left: 0; }
.tri.right { border-left-color: #666; border-right: 0; }
.tri.dim.left { border-right-color: #c4c4c4; }
.tri.dim.right { border-left-color: #c4c4c4; }

.sheetbar { height: 28px; flex: none; background: #e6e6e6; border-top: 1px solid #a6a6a6; display: flex; align-items: flex-start; }
.navs { width: 100px; height: 27px; display: flex; align-items: center; gap: 25px; padding-left: 26px; }
.sheet-tab { width: 69px; height: 24px; margin-top: -1px; background: #fff; border-left: 1px solid #bbb; border-right: 1px solid #bbb; border-bottom: 2px solid #217346; color: #217346; font: 13px/25px "Open Sans", sans-serif; text-align: center; }
.addsheet { margin: 5px 0 0 33px; }
.sdots { width: 2px; height: 12px; margin: 7px 0 0 601px; background: repeating-linear-gradient(#999 0 2px, transparent 2px 5px); }
.hscroll { display: flex; margin: 6px 0 0 15px; width: 508px; }
.hscroll .sbtn { width: 14px; height: 15px; }
.hthumb { width: 452px; height: 15px; background: #fff; border: 1px solid #ababab; border-left: 0; }
.htrack { flex: 1; background: #d6d6d6; }

/* status */
.status { height: 23px; flex: none; background: #f1f1f1; border-top: 1px solid #d4d4d4; border-bottom: 1px solid #9a9a9a; display: flex; align-items: center; color: #555; white-space: nowrap; }
.ready { margin-left: 7px; width: 44px; }
.stat { flex: none; }
.macro { margin-right: 733px; }
.st-avg { width: 132px; }
.st-cnt { width: 60px; }
.st-sum { width: 78px; }
.view { width: 37px; height: 21px; display: flex; align-items: center; justify-content: center; }
.view-on { background: #c6c6c6; margin-right: 2px; }
.zoom-minus { width: 7px; height: 2px; background: #555; margin-left: 6px; }
.slider { width: 103px; height: 1px; background: #b0b0b0; margin-left: 3px; position: relative; }
.knob { position: absolute; left: 48px; top: -6px; width: 4px; height: 13px; background: #555; }
.zoom-plus { width: 9px; height: 9px; margin-left: 2px; background: linear-gradient(#555, #555) center / 9px 2px no-repeat, linear-gradient(#555, #555) center / 2px 9px no-repeat; }
.pct { margin-left: 15px; }

/* dialog */
.shade-dialog { position: absolute; left: 492px; top: 216px; width: 171px; height: 156px; border-radius: 3px; background: #efefef; box-shadow: 0 10px 30px 6px rgba(0,0,0,.48); display: flex; flex-direction: column; font-family: "Noto Sans CJK SC", sans-serif; color: #333; z-index: 5; }
.dlg-title { height: 25px; flex: none; border-radius: 3px 3px 0 0; background: linear-gradient(#d9d9d9, #b2b2b2); border-bottom: 1px solid #8c8c8c; display: flex; align-items: center; position: relative; padding-bottom: 2px; }
.orb { position: absolute; top: 5px; width: 12px; height: 12px; border-radius: 50%; border: 1px solid #777; }
.orb.green { left: 111px; background: radial-gradient(circle at 50% 70%, #b9ea9c, #5fa650); border-color: #6b8f63; }
.orb.red { left: 138px; background: radial-gradient(circle at 50% 70%, #ff9a90, #d8413a); border-color: #a56a66; }
.dlg-body { flex: 1; padding: 7px 6px 0 6px; display: flex; flex-direction: column; border-bottom: 3px solid #9d9d9d; border-radius: 0 0 3px 3px; }
.legend { display: flex; align-items: center; gap: 7px; height: 16px; }
.legend i { flex: 1; height: 1px; background: #dcdcdc; }
.radio-row { display: flex; align-items: center; height: 22px; padding-left: 9px; gap: 4px; }
.legend + .radio-row { margin-top: 7px; }
.radio { width: 12px; height: 12px; border-radius: 50%; background: linear-gradient(#e6e6e6, #fff); border: 1px solid #8f8f8f; flex: none; }
.radio.on { background: radial-gradient(circle, #1f4e86 0 2px, #cfe0f2 3px, #e9f1fa 100%); border-color: #5a84b4; }
.focus { outline: 1px dotted #222; padding: 0 1px; line-height: 15px; }
.plain { padding: 0 1px; line-height: 15px; }
.dlg-btns { display: flex; justify-content: space-between; margin-top: 19px; margin-left: -1px; }
.btn { width: 76px; height: 25px; border: 1px solid #9b9b9b; border-radius: 3px; background: linear-gradient(#fafafa, #f2f2f2 50%, #dcdcdc); font-family: "Noto Sans CJK SC", sans-serif; font-size: 12px; color: #333; }
.btn.primary { background: linear-gradient(#d7ebfb, #a8d5f7 50%, #6cb6ee); border-color: #4a6b8a; }

/* watermark */
.watermark { position: absolute; inset: 0; pointer-events: none; z-index: 6; }
.paw { position: absolute; left: 1133px; top: 621px; }
.wm { position: absolute; color: rgba(255,255,255,.65); -webkit-text-stroke: 1px #d2d2d2; white-space: nowrap; font-family: "Liberation Sans", sans-serif; }
.wm-bai { left: 1048px; top: 648px; font-size: 52px; line-height: 52px; font-weight: 700; }
.wm-du { left: 1149px; top: 662px; font-size: 31px; line-height: 31px; }
.wm-jy { left: 1205px; top: 655px; font-size: 41px; line-height: 44px; font-weight: 700; font-family: "Noto Sans CJK SC", sans-serif; }
.wm-url { left: 1042px; top: 704px; font-size: 29px; line-height: 32px; letter-spacing: 1.2px; }
```
